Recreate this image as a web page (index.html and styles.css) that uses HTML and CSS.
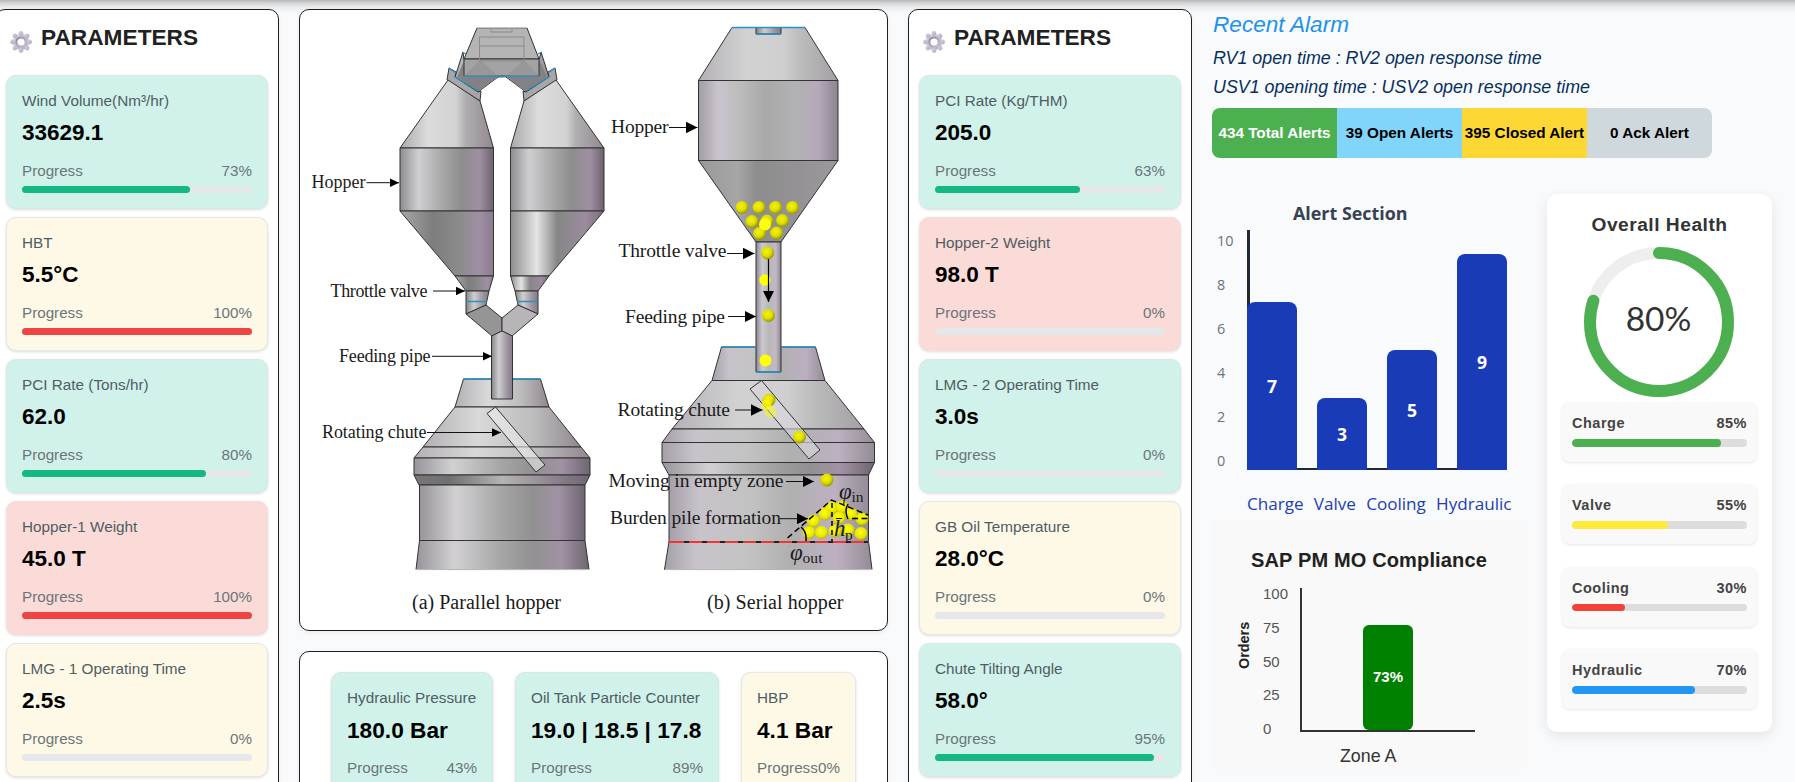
FILE: index.html
```html
<!DOCTYPE html>
<html lang="en">
<head>
<meta charset="utf-8">
<title>Hopper dashboard</title>
<link rel="stylesheet" href="styles.css">
</head>
<body>
<svg class="defs" width="0" height="0" aria-hidden="true">
  <defs>
    <linearGradient id="gearFill" x1="0" y1="0" x2="1" y2="1"><stop offset="0" stop-color="#d9d3e0"/><stop offset="1" stop-color="#b3a8c2"/></linearGradient>
    <linearGradient id="gearRing" x1="0" y1="0" x2="1" y2="1"><stop offset="0" stop-color="#8d829b"/><stop offset="1" stop-color="#cbc3d5"/></linearGradient>
    <symbol id="gear" viewBox="-11 -11 22 22">
      <g fill="url(#gearFill)">
        <circle r="8"/>
        <g id="teeth"><circle cy="-8.6" r="2.4"/><circle cy="8.6" r="2.4"/><circle cx="-8.6" r="2.4"/><circle cx="8.6" r="2.4"/><circle cx="6.1" cy="6.1" r="2.4"/><circle cx="-6.1" cy="6.1" r="2.4"/><circle cx="6.1" cy="-6.1" r="2.4"/><circle cx="-6.1" cy="-6.1" r="2.4"/></g>
      </g>
      <circle r="4.6" fill="#fff" stroke="url(#gearRing)" stroke-width="2"/>
    </symbol>
  </defs>
</svg>
<div class="top-shade"></div>
<main class="dashboard">
  <section class="panel side">
    <header class="side-head"><svg class="gear"><use href="#gear"/></svg><h2>PARAMETERS</h2></header>
    <div class="stack">
      <article class="card green"><div class="label">Wind Volume(Nm³/hr)</div><div class="value">33629.1</div><div class="prog"><span>Progress</span><span>73%</span></div><div class="track"><div class="fill ok" style="width:73%"></div></div></article>
      <article class="card yellow"><div class="label">HBT</div><div class="value">5.5°C</div><div class="prog"><span>Progress</span><span>100%</span></div><div class="track"><div class="fill bad" style="width:100%"></div></div></article>
      <article class="card green"><div class="label">PCI Rate (Tons/hr)</div><div class="value">62.0</div><div class="prog"><span>Progress</span><span>80%</span></div><div class="track"><div class="fill ok" style="width:80%"></div></div></article>
      <article class="card red"><div class="label">Hopper-1 Weight</div><div class="value">45.0 T</div><div class="prog"><span>Progress</span><span>100%</span></div><div class="track"><div class="fill bad" style="width:100%"></div></div></article>
      <article class="card yellow"><div class="label">LMG - 1 Operating Time</div><div class="value">2.5s</div><div class="prog"><span>Progress</span><span>0%</span></div><div class="track"></div></article>
    </div>
  </section>

  <div class="center">
    <section class="panel figure">
      <svg class="diagram" viewBox="300 10 587 620" width="587" height="620">
        <defs>
          <linearGradient id="body"><stop offset="0" stop-color="#8d8d8f"/><stop offset=".2" stop-color="#d0ced1"/><stop offset=".48" stop-color="#a4a4a4"/><stop offset=".66" stop-color="#8d8d8d"/><stop offset=".85" stop-color="#a08fa3"/><stop offset="1" stop-color="#6d626e"/></linearGradient>
          <linearGradient id="upper"><stop offset="0" stop-color="#aaa9ac"/><stop offset=".3" stop-color="#dcdcdc"/><stop offset=".6" stop-color="#d2d2d2"/><stop offset=".7" stop-color="#b0aeb0"/><stop offset="1" stop-color="#92888f"/></linearGradient>
          <linearGradient id="coneL"><stop offset="0" stop-color="#a8a8a8"/><stop offset=".35" stop-color="#7d7d7d"/><stop offset=".65" stop-color="#8c8c8c"/><stop offset=".85" stop-color="#a18fa5"/><stop offset="1" stop-color="#8a7c8d"/></linearGradient>
          <linearGradient id="coneR"><stop offset="0" stop-color="#8e8e8e"/><stop offset=".28" stop-color="#e4e4e4"/><stop offset=".5" stop-color="#868686"/><stop offset=".8" stop-color="#9b8c9e"/><stop offset="1" stop-color="#7a6e7c"/></linearGradient>
          <linearGradient id="pipe"><stop offset="0" stop-color="#858585"/><stop offset=".35" stop-color="#cfcfcf"/><stop offset=".7" stop-color="#a39aa5"/><stop offset="1" stop-color="#857a87"/></linearGradient>
          <linearGradient id="vessel"><stop offset="0" stop-color="#98949a"/><stop offset=".22" stop-color="#d2d0d3"/><stop offset=".5" stop-color="#a5a5a5"/><stop offset=".68" stop-color="#929092"/><stop offset=".84" stop-color="#a092a4"/><stop offset="1" stop-color="#6f6571"/></linearGradient>
          <linearGradient id="dome"><stop offset="0" stop-color="#b3b0b4"/><stop offset=".35" stop-color="#d9d9d9"/><stop offset=".7" stop-color="#bdbcbd"/><stop offset="1" stop-color="#91878f"/></linearGradient>
          <linearGradient id="band"><stop offset="0" stop-color="#777"/><stop offset=".2" stop-color="#707070"/><stop offset=".5" stop-color="#b5b3b5"/><stop offset=".8" stop-color="#8d828f"/><stop offset="1" stop-color="#6e6670"/></linearGradient>
          <linearGradient id="sBody"><stop offset="0" stop-color="#a09da2"/><stop offset=".14" stop-color="#cbc4ce"/><stop offset=".3" stop-color="#bcbcbc"/><stop offset=".48" stop-color="#a9a9a9"/><stop offset=".7" stop-color="#b3b1b4"/><stop offset=".86" stop-color="#b5a9b9"/><stop offset="1" stop-color="#8b848e"/></linearGradient>
          <linearGradient id="sTop"><stop offset="0" stop-color="#b4b1b7"/><stop offset=".35" stop-color="#d2d2d2"/><stop offset=".6" stop-color="#cfcfcf"/><stop offset=".75" stop-color="#bababa"/><stop offset="1" stop-color="#a49fa6"/></linearGradient>
          <linearGradient id="sCone"><stop offset="0" stop-color="#999"/><stop offset=".28" stop-color="#a6a6a6"/><stop offset=".42" stop-color="#8d8d8d"/><stop offset=".65" stop-color="#939193"/><stop offset="1" stop-color="#9d969f"/></linearGradient>
          <linearGradient id="sVessel"><stop offset="0" stop-color="#a5a0a8"/><stop offset=".15" stop-color="#c8c3ca"/><stop offset=".4" stop-color="#c3c3c3"/><stop offset=".6" stop-color="#b0b0b0"/><stop offset=".83" stop-color="#bdb0c1"/><stop offset="1" stop-color="#938c96"/></linearGradient>
          <linearGradient id="sPipe"><stop offset="0" stop-color="#8d8791"/><stop offset=".25" stop-color="#cdc8d0"/><stop offset=".5" stop-color="#b8b8b8"/><stop offset=".8" stop-color="#c2b8c5"/><stop offset="1" stop-color="#89838d"/></linearGradient>
          <radialGradient id="ball" cx=".42" cy=".38" r=".65"><stop offset="0" stop-color="#f4f400"/><stop offset=".55" stop-color="#dede00"/><stop offset="1" stop-color="#8f8f00"/></radialGradient>
          <radialGradient id="pileBall" cx=".45" cy=".4" r=".65"><stop offset="0" stop-color="#ffff10"/><stop offset=".65" stop-color="#e6e600"/><stop offset="1" stop-color="#a5a500"/></radialGradient>
          <marker id="head" viewBox="0 0 10 8" refX="10" refY="4" markerWidth="9" markerHeight="8.5" markerUnits="userSpaceOnUse" preserveAspectRatio="none" orient="auto"><path d="M0 0 10 4 0 8z" fill="#000"/></marker>
          <marker id="headBig" viewBox="0 0 10 10" refX="10" refY="5" markerWidth="11.5" markerHeight="11.5" markerUnits="userSpaceOnUse" orient="auto"><path d="M0 0 10 5 0 10z" fill="#000"/></marker>
        </defs>

        <!-- parallel hopper -->
        <g class="edge">
          <path d="M463 52 455 77 478 92 498 77 539 76 464 60z" fill="url(#upper)"/>
          <path d="M541 52 549 77 526 92 506 77 539 60z" fill="url(#upper)"/>
          <path d="M464 61 497 77 478 92 457 77z" fill="#828183" stroke="none"/>
          <path d="M540 61 507 77 526 92 547 77z" fill="#828183" stroke="none"/>
          <path d="M449 68 447 80 480 101 481 91 478 92 455 77 456 72z" fill="#a9a6aa"/>
          <path d="M555 68 557 80 524 101 523 91 526 92 549 77 548 72z" fill="#a9a6aa"/>
          <path d="M477 28H527L539 59H464z" fill="#b4b4b4"/>
          <path d="M464 59H539V76H464z" fill="#a3a3a3"/>
          <path d="M464 76 480 60 498 76z M539 76 524 60 506 76z" fill="#8f9193" stroke="none" opacity=".6"/>
          <path d="M479.500 37H524V61H479.500z M479.500 46H524 M491 28V32H512V28" fill="none" stroke="#8b8b8b"/>
          <path d="M448 80 480 101 493.500 148H400z" fill="url(#upper)"/>
          <path d="M556 80 524 101 510.500 148H604z" fill="url(#upper)"/>
          <path d="M400 148H493.500V211H400z" fill="url(#body)"/>
          <path d="M510.500 148H604V211H510.500z" fill="url(#body)"/>
          <path d="M400 211H493.500V276H455z" fill="url(#coneL)"/>
          <path d="M604 211H510.500V276H549z" fill="url(#coneR)"/>
          <path d="M455 276H493.500L489 291H466z" fill="url(#coneL)"/>
          <path d="M549 276H510.500L515 291H538z" fill="url(#coneR)"/>
          <path d="M466 291H489L486 305 466 314z" fill="url(#pipe)"/>
          <path d="M538 291H515L518 305 538 314z" fill="url(#pipe)"/>
          <path d="M466 314 486 305 502 318V331L492 336z" fill="#969596"/>
          <path d="M538 314 518 305 502 318V331L512 336z" fill="#b7b5b8"/>
          <path d="M463.500 379H540.500L549 407H455z" fill="url(#dome)"/>
          <path d="M455 407H549L581 447H423z" fill="url(#dome)"/>
          <path d="M423 447H581L590 458H414z" fill="url(#dome)"/>
          <path d="M414 458H590V475H414z" fill="url(#vessel)"/>
          <path d="M414 475H590L585 485H419z" fill="url(#band)"/>
          <path d="M419.500 485H585V540.500H419.500z" fill="url(#vessel)"/>
          <path d="M419.500 540.500H585L589 569.500H416z" fill="url(#vessel)"/>
          <path d="M491.500 336 502 331 512.500 336V399H491.500z" fill="url(#pipe)"/>
          <path d="M487 413.500 495.500 407 545 465 536 472z" fill="#ececec" fill-opacity=".6"/>
        </g>
        <path d="M416 569.700H589M477 27.800H527" stroke="#d8d8d8"/>
        <path class="blue" d="M464 76.300H539M463.500 379H491M513 379H540.500M466 301.500H487M517 301.500H538M449 68 456 73M455 77 478 91M462 52 466 54M555 68 548 73M549 77 526 91M542 52 538 54"/>

        <!-- serial hopper -->
        <g class="edge">
          <path d="M732 27.500H805L838 80.500H698.500z" fill="url(#sTop)"/>
          <path d="M756 27.500H781V34H756z" fill="url(#pipe)"/>
          <path d="M698.500 80.500H838V160.500H698.500z" fill="url(#sBody)"/>
          <path d="M698.500 160.500H838L781 242H756z" fill="url(#sCone)"/>
          <path d="M721.500 347H815.500L825 380.500H712z" fill="url(#sVessel)"/>
          <path d="M712 380.500H825L864 429H672z" fill="url(#sTop)"/>
          <path d="M672 429H864L874.500 442.500H662z" fill="url(#sVessel)"/>
          <path d="M662 442.500H874.500V462.500H662z" fill="url(#sVessel)"/>
          <path d="M662 462.500H874.500L868.500 475H669z" fill="url(#vessel)"/>
          <path d="M669 475H868.500V541.500H669z" fill="url(#sVessel)"/>
          <path d="M669 541.500H868.500L872 569.500H664.500z" fill="url(#sVessel)"/>
          <path d="M756 242H781V372H756z" fill="url(#sPipe)"/>
          <path d="M750 389 761.500 380.500 820 450 809 459z" fill="#d9d6db" fill-opacity=".65"/>
        </g>
        <path d="M665 569.700H872" stroke="#d8d8d8"/>
        <path class="blue" d="M732 27.500H805M756 34H781M721.500 347H756M781 347H815.500M756 372H781"/>
        <g fill="url(#ball)">
          <circle cx="742" cy="207.500" r="6.500"/><circle cx="759" cy="207.500" r="6.500"/><circle cx="775.500" cy="207.500" r="6.500"/><circle cx="792.500" cy="207.500" r="6.500"/>
          <circle cx="752" cy="221.500" r="6.500"/><circle cx="767" cy="221" r="6.500"/><circle cx="782.500" cy="220.500" r="6.500"/>
          <circle cx="759.500" cy="233.500" r="6.500"/><circle cx="776.500" cy="233" r="6.500"/>
          <circle cx="767.500" cy="253" r="6.500"/><circle cx="768.500" cy="315.500" r="6.500"/>
          <circle cx="769" cy="400" r="6.500"/><circle cx="799.500" cy="437" r="6.500"/><circle cx="827" cy="480" r="6.500"/>
        </g>
        <g fill="#ffff05"><circle cx="765" cy="224.500" r="6"/><circle cx="765" cy="280" r="5.700"/><circle cx="765.500" cy="360.500" r="6"/><circle cx="766.500" cy="405" r="5" opacity=".7"/><circle cx="770.500" cy="412" r="6" opacity=".45"/></g>
        <g fill="url(#pileBall)">
          <circle cx="832" cy="508" r="6.500"/><circle cx="842" cy="507" r="6.500"/><circle cx="825" cy="514" r="6.500"/><circle cx="851" cy="514" r="6.500"/><circle cx="862" cy="519" r="6.500"/><circle cx="839" cy="518" r="6.500"/><circle cx="813.500" cy="521" r="6.500"/><circle cx="809" cy="532.500" r="6.500"/><circle cx="821.500" cy="532.500" r="6.500"/><circle cx="835" cy="531" r="6.500"/><circle cx="848" cy="530" r="6.500"/><circle cx="861" cy="533.500" r="6.500"/>
        </g>
        <g fill="none" stroke="#000" stroke-width="1.500">
          <path d="M787.500 538 831.500 500 868 515" stroke-dasharray="6 3.500"/>
          <path d="M832 503V541" stroke-dasharray="5 4"/>
          <path d="M852 518.500H868" stroke-dasharray="6 3.500"/>
          <path d="M801 527Q807 532 806 541M848 504Q844 511 848 519"/>
          <path d="M768.500 259V302" stroke-width="1.200" marker-end="url(#headBig)"/>
        </g>
        <path d="M668.500 542H868.500" stroke="#f03535" stroke-width="1.800"/>
        <path d="M684 542H868" stroke="#222" stroke-width="1.800" stroke-dasharray="5 13"/>

        <g class="lead">
          <path d="M366.500 182.700H399"/><path d="M433 291H465"/><path d="M432 356.300H492"/><path d="M427 432.500H501"/>
        </g>
        <g class="lead big">
          <path d="M669 127.500H697.500"/><path d="M727 253.500H754.500"/><path d="M728 316.500H756"/><path d="M735 410H762.500"/><path d="M786 481.500H814"/><path d="M780 518.700H808"/>
        </g>
        <g class="note">
          <text x="311.500" y="188" textLength="54">Hopper</text>
          <text x="330.500" y="296.500" textLength="97">Throttle valve</text>
          <text x="339" y="361.500" textLength="91.500">Feeding pipe</text>
          <text x="322" y="437.500" textLength="104.500">Rotating chute</text>
        </g>
        <g class="note large">
          <text x="611" y="132.500" textLength="57.500">Hopper</text>
          <text x="618.500" y="257" textLength="108">Throttle valve</text>
          <text x="625" y="322.500" textLength="100">Feeding pipe</text>
          <text x="617.500" y="416" textLength="112.500">Rotating chute</text>
          <text x="608.500" y="486.500" textLength="175">Moving in empty zone</text>
          <text x="610" y="523.500" textLength="171">Burden pile formation</text>
          <text class="cap" x="412" y="608.500" textLength="149">(a) Parallel hopper</text>
          <text class="cap" x="707" y="608.500" textLength="136.500">(b) Serial hopper</text>
        </g>
        <g class="note sym">
          <text class="phi" x="839" y="499">φ</text><text class="sub" x="851.500" y="502">in</text>
          <text class="phi" x="790" y="560">φ</text><text class="sub" x="802.500" y="563" textLength="20">out</text>
          <text class="phi" x="834" y="536">h</text><text class="sub" x="845" y="540">p</text>
          <path d="M836 518.500H842" stroke="#111"/>
        </g>
      </svg>
    </section>
    <section class="panel lower">
      <article class="card green w1"><div class="label">Hydraulic Pressure</div><div class="value">180.0 Bar</div><div class="prog"><span>Progress</span><span>43%</span></div><div class="track"><div class="fill ok" style="width:43%"></div></div></article>
      <article class="card green w2"><div class="label">Oil Tank Particle Counter</div><div class="value">19.0 | 18.5 | 17.8</div><div class="prog"><span>Progress</span><span>89%</span></div><div class="track"><div class="fill ok" style="width:89%"></div></div></article>
      <article class="card yellow w3"><div class="label">HBP</div><div class="value">4.1 Bar</div><div class="prog"><span>Progress</span><span>0%</span></div><div class="track"></div></article>
    </section>
  </div>

  <section class="panel side">
    <header class="side-head"><svg class="gear"><use href="#gear"/></svg><h2>PARAMETERS</h2></header>
    <div class="stack">
      <article class="card green"><div class="label">PCI Rate (Kg/THM)</div><div class="value">205.0</div><div class="prog"><span>Progress</span><span>63%</span></div><div class="track"><div class="fill ok" style="width:63%"></div></div></article>
      <article class="card red"><div class="label">Hopper-2 Weight</div><div class="value">98.0 T</div><div class="prog"><span>Progress</span><span>0%</span></div><div class="track"></div></article>
      <article class="card green"><div class="label">LMG - 2 Operating Time</div><div class="value">3.0s</div><div class="prog"><span>Progress</span><span>0%</span></div><div class="track"></div></article>
      <article class="card yellow"><div class="label">GB Oil Temperature</div><div class="value">28.0°C</div><div class="prog"><span>Progress</span><span>0%</span></div><div class="track"></div></article>
      <article class="card green"><div class="label">Chute Tilting Angle</div><div class="value">58.0°</div><div class="prog"><span>Progress</span><span>95%</span></div><div class="track"><div class="fill ok" style="width:95%"></div></div></article>
    </div>
  </section>

  <section class="right">
    <div class="alarm">
      <h3>Recent Alarm</h3>
      <p>RV1 open time : RV2 open response time</p>
      <p>USV1 opening time : USV2 open response time</p>
    </div>
    <div class="alerts"><span class="a1">434 Total Alerts</span><span class="a2">39 Open Alerts</span><span class="a3">395 Closed Alert</span><span class="a4">0 Ack Alert</span></div>
    <div class="right-grid">
      <div class="charts">
        <div class="alert-chart">
          <h4>Alert Section</h4>
          <div class="chart-row">
            <div class="ticks"><span>10</span><span>8</span><span>6</span><span>4</span><span>2</span><span>0</span></div>
            <div class="bars"><div class="bar" style="height:168px">7</div><div class="bar" style="height:72px">3</div><div class="bar" style="height:120px">5</div><div class="bar" style="height:216px">9</div></div>
          </div>
          <div class="names"><span>Charge</span><span>Valve</span><span>Cooling</span><span>Hydraulic</span></div>
        </div>
        <div class="sap">
          <h4>SAP PM MO Compliance</h4>
          <div class="sap-row">
            <div class="orders">Orders</div>
            <div class="sap-ticks"><span>100</span><span>75</span><span>50</span><span>25</span><span>0</span></div>
            <div class="sap-plot"><div class="sap-bar">73%</div></div>
          </div>
          <div class="zone">Zone A</div>
        </div>
      </div>
      <div class="health">
        <h4>Overall Health</h4>
        <svg class="ring" viewBox="0 0 150 150" width="150" height="150">
          <circle cx="75" cy="75" r="69" fill="none" stroke="#eee" stroke-width="12"/>
          <circle cx="75" cy="75" r="69" fill="none" stroke="#4caf50" stroke-width="12" stroke-linecap="round" pathLength="100" stroke-dasharray="80 100" transform="rotate(-90 75 75)"/>
          <text x="74.500" y="84" text-anchor="middle">80%</text>
        </svg>
        <div class="items">
          <div class="item"><div class="item-head"><span>Charge</span><span>85%</span></div><div class="item-track"><div class="item-fill" style="width:85%;background:#4caf50"></div></div></div>
          <div class="item"><div class="item-head"><span>Valve</span><span>55%</span></div><div class="item-track"><div class="item-fill" style="width:55%;background:#ffeb3b"></div></div></div>
          <div class="item"><div class="item-head"><span>Cooling</span><span>30%</span></div><div class="item-track"><div class="item-fill" style="width:30%;background:#f44336"></div></div></div>
          <div class="item"><div class="item-head"><span>Hydraulic</span><span>70%</span></div><div class="item-track"><div class="item-fill" style="width:70%;background:#2196f3"></div></div></div>
        </div>
      </div>
    </div>
  </section>
</main>
</body>
</html>
```

FILE: styles.css
```css
* { box-sizing: border-box; }
body {
  margin: 0;
  height: 782px;
  overflow: hidden;
  background: #f9fafc;
  font-family: "Liberation Sans", Arial, sans-serif;
  color: #212121;
}
h2, h3, h4, p { margin: 0; }
.defs { position: absolute; }
.top-shade {
  position: absolute;
  inset: 0 0 auto 0;
  height: 14px;
  background: linear-gradient(rgba(0,0,0,.27), rgba(0,0,0,.16) 20%, rgba(0,0,0,.06) 50%, rgba(0,0,0,0));
}
.dashboard {
  position: relative;
  display: flex;
  align-items: flex-start;
  gap: 20px;
  height: 782px;
  overflow: hidden;
  margin-left: -5px;
  padding-top: 9px;
}
.panel {
  background: #fff;
  border: 1px solid #1f1f1f;
  border-radius: 10px;
  box-shadow: 0 2px 5px rgba(0,0,0,.06);
}
.side { flex: none; width: 284px; height: 830px; padding: 0 10px; }
.side-head { display: flex; height: 65px; padding: 13px 0 0 4px; gap: 9px; }
.side-head h2 { font-size: 22.7px; line-height: 28px; font-weight: 700; }
.gear { width: 22px; height: 22px; margin-top: 8px; }
.stack { display: flex; flex-direction: column; gap: 8px; }
.card {
  height: 134px;
  padding: 15px;
  border: 1px solid #e3e8e8;
  border-radius: 10px;
  box-shadow: 0 1px 3px rgba(0,0,0,.14);
  white-space: nowrap;
}
.green { background: #d1f2eb; border-color: #d5eae6; }
.yellow { background: #fef9e7; }
.red { background: #fadbd8; border-color: #f1dedd; }
.label { font-size: 15.3px; line-height: 20px; color: #4f5d63; }
.value { margin-top: 8px; font-size: 22.5px; line-height: 28px; font-weight: 700; color: #000; }
.prog { display: flex; justify-content: space-between; margin-top: 14px; font-size: 15.2px; line-height: 20px; color: #6b7579; }
.track { height: 7px; margin-top: 5px; border-radius: 4px; background: #e5e7eb; }
.fill { height: 7px; border-radius: 4px; }
.ok { background: #14b885; }
.bad { background: #ef4444; }

.center { flex: none; width: 589px; display: flex; flex-direction: column; gap: 20px; }
.figure { height: 622px; }
.diagram { display: block; }
.edge { stroke: #333; stroke-width: 1; stroke-linejoin: round; }
.blue { fill: none; stroke: #2d8fc4; stroke-width: 1.3; }
.lead { stroke: #111; stroke-width: 1; }
.lead path { marker-end: url(#head); }
.big path { marker-end: url(#headBig); }
.note { font-family: "Liberation Serif", "Times New Roman", serif; font-size: 18px; fill: #1a1a1a; }
.large { font-size: 19.5px; }
.cap { font-size: 20px; }
.phi { font-size: 23px; font-style: italic; }
.sub { font-size: 15.5px; }
.lower { display: flex; align-items: flex-start; gap: 22px; height: 200px; padding: 20px 0 0 31px; }
.lower .value { font-size: 22.7px; }
.w1 { width: 162px; }
.w2 { width: 204px; }
.w3 { width: 115px; }

.right { flex: none; width: 583px; }
.alarm { font-style: italic; padding-left: 1px; }
.alarm h3 { font-size: 22.6px; font-weight: 400; line-height: 32px; color: #1c93ec; }
.alarm p { font-size: 17.85px; line-height: 29px; color: #062f5c; }
.alarm h3 + p { margin-top: 3px; }
.alerts { display: flex; width: 500px; height: 50px; margin-top: 6px; border-radius: 8px; overflow: hidden; font-size: 15.3px; font-weight: 700; color: #000; }
.alerts span { width: 125px; text-align: center; line-height: 50px; white-space: nowrap; }
.a1 { background: #4caf50; color: #fff; }
.a2 { background: #81d4fa; }
.a3 { background: #fdd835; }
.a4 { background: #cfd8dc; }
.right-grid { display: flex; gap: 21px; margin-top: 36px; }
.charts { width: 314px; }
.alert-chart { height: 326px; font-family: "Open Sans", "Noto Sans", sans-serif; }
.alert-chart h4 { padding: 7px 0 1px 81px; font-size: 17.9px; line-height: 25px; font-weight: 700; color: #374151; white-space: nowrap; }
.chart-row { display: flex; margin-top: 3px; }
.ticks { width: 35px; padding: 1px 0 0 5px; font-size: 14.4px; color: #6b7280; display: flex; flex-direction: column; gap: 24px; }
.ticks span { line-height: 20px; }
.bars { display: flex; align-items: flex-end; gap: 20px; width: 260px; height: 240px; background: linear-gradient(#1f2937, #1f2937) left / 3px 100% no-repeat, linear-gradient(#1f2937, #1f2937) bottom / 100% 2px no-repeat; }
.bar { width: 50px; display: flex; align-items: center; justify-content: center; border-radius: 8px 8px 0 0; background: #1a3bb8; color: #fff; font-weight: 700; font-size: 17.6px; }
.names { display: flex; gap: 10.2px; margin: 19px 0 0 35px; font-size: 17.1px; line-height: 28px; color: #1e40af; }
.sap { height: 250px; background: #f9f9f9; padding-top: 26px; }
.sap h4 { text-align: center; font-size: 20px; line-height: 28px; letter-spacing: .15px; }
.sap-row { display: flex; margin-top: 14px; height: 144px; }
.orders { width: 20px; margin: 34px 0 0 22px; height: 47px; writing-mode: vertical-rl; transform: rotate(180deg); font-size: 14.4px; line-height: 20px; font-weight: 700; color: #222; }
.sap-ticks { display: flex; flex-direction: column; justify-content: space-between; width: 37px; margin-left: 9px; margin-top: -4px; height: 155px; font-size: 15px; color: #555; }
.sap-ticks span { line-height: 20px; }
.sap-plot { width: 175px; height: 144px; border-left: 2px solid #333; border-bottom: 2px solid #333; display: flex; align-items: flex-end; padding-left: 61px; }
.sap-bar { width: 50px; height: 105px; border-radius: 6px; background: #008000; color: #fff; font-size: 15px; font-weight: 700; text-align: center; line-height: 103px; }
.zone { padding-left: 128px; margin-top: 14px; font-size: 17.8px; line-height: 20px; color: #333; }
.health { width: 225px; height: 538px; padding: 20px 15px 0; border-radius: 10px; background: #fff; box-shadow: 0 4px 14px rgba(0,0,0,.09); text-align: center; }
.health h4 { font-size: 19.2px; line-height: 22px; letter-spacing: .5px; color: #333; }
.ring { display: block; margin: 11px auto 5px 22px; }
.ring text { font-family: Lato, "Open Sans", sans-serif; font-size: 33.5px; fill: #333; }
.items { display: flex; flex-direction: column; gap: 22.4px; }
.item { height: 60px; padding: 12px 10px 0; border-radius: 8px; background: #f9f9f9; box-shadow: 0 1px 3px rgba(0,0,0,.1); }
.item-head { display: flex; justify-content: space-between; font-size: 14.5px; line-height: 18px; font-weight: 700; letter-spacing: .5px; color: #444; }
.item-track { height: 7.5px; margin-top: 7px; border-radius: 4px; background: #ddd; overflow: hidden; }
.item-fill { height: 100%; border-radius: 4px; }
```
